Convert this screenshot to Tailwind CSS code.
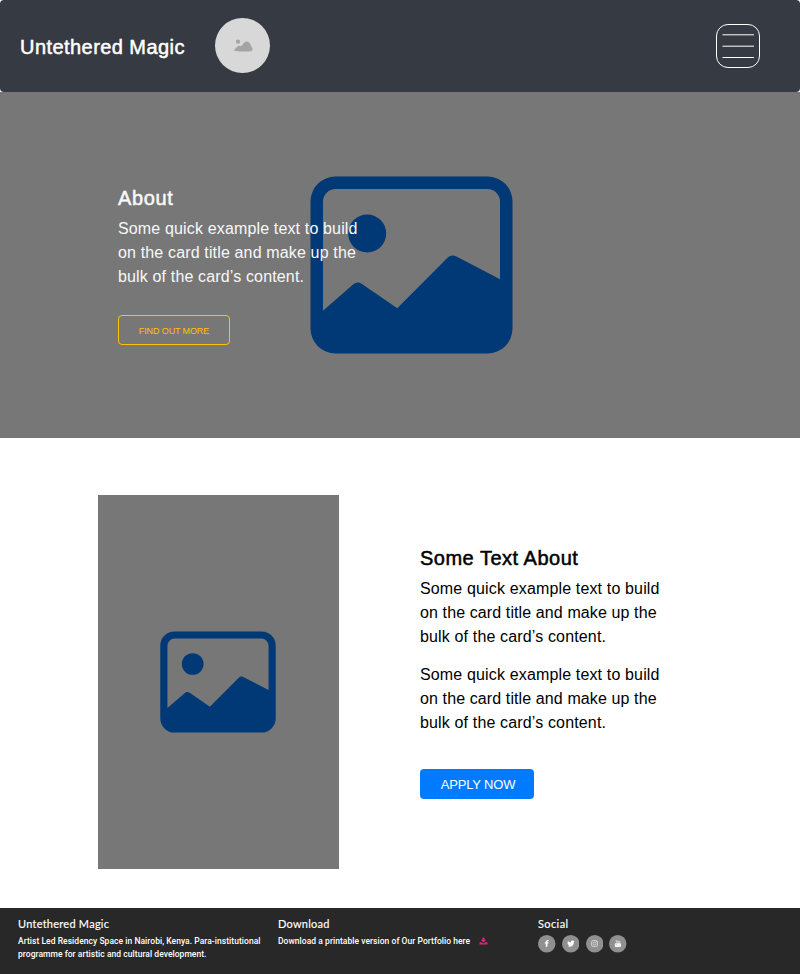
<!DOCTYPE html>
<html lang="en">
<head>
<meta charset="utf-8">
<title>Untethered Magic</title>
<script src="https://cdn.jsdelivr.net/npm/@tailwindcss/browser@4"></script>
</head>
<body class="w-[800px] bg-white font-['Liberation_Sans',sans-serif] text-black">
<svg class="hidden">
  <symbol id="image" viewBox="0 0 203 178">
    <path fill="#003976" fill-rule="evenodd" d="M25.5.5h152a25 25 0 0 1 25 25v127a25 25 0 0 1-25 25h-152a25 25 0 0 1-25-25v-127a25 25 0 0 1 25-25ZM13 134.700 43 108.500Q47.500 104.800 52 107.900L87.300 132.200 137.500 81.800Q141.500 77.800 146.500 80.500L190 103.200V25.500A12.500 12.500 0 0 0 177.500 13h-152A12.500 12.500 0 0 0 13 25.500Z"/>
    <circle cx="57.200" cy="57.500" r="19" fill="#003976"/>
  </symbol>
</svg>
<header class="flex h-[92px] items-center rounded bg-[#363a42] pl-5 pr-10">
  <h1 class="w-[195px] whitespace-nowrap pt-0.5 text-[20px] leading-6 tracking-[0.44px] text-white [-webkit-text-stroke:0.5px_white]">Untethered Magic</h1>
  <div class="mb-px flex size-[55px] items-center justify-center rounded-full bg-[#d8d8d8]">
    <svg class="h-[13px] w-[20px]" viewBox="0 0 20 13" fill="#a4a4a4"><circle cx="5" cy="2.700" r="2.100"/><path d="M.2 11.200C2 10.500 3.800 8 5 7c1-.8 2 .2 3 .2C9.500 7 10.500 2.600 14 2.600c3 0 3.500 4 5.300 6.400.6 1.200.2 2.400-1 2.900-2 .8-10 .8-13 .3-2-.3-4.300-.5-5.100-1Z"/></svg>
  </div>
  <button class="ml-auto size-11" aria-label="Menu">
    <svg class="size-11" viewBox="0 0 44 44" fill="none" stroke="#fff"><rect x=".5" y=".5" width="43" height="43" rx="11.500"/><path d="M6.500 10.800h31.500M6.500 22.200h31.500M6.500 33.500h31.500"/></svg>
  </button>
</header>
<section class="relative h-[346px] bg-[#777]">
  <svg class="absolute left-[310px] top-[84px] h-[178px] w-[203px]"><use href="#image"/></svg>
  <div class="relative pl-[118px] pt-[94px]">
    <h2 class="text-[20px] leading-6 tracking-[0.65px] text-[#f8f8f8] [-webkit-text-stroke:0.5px_#f8f8f8]">About</h2>
    <p class="mt-[7px] whitespace-nowrap text-base leading-6 tracking-[0.15px] text-[#f8f8f8]">Some quick example text to build<br>on the card title and make up the<br>bulk of the card’s content.</p>
    <button class="mt-[26px] block h-[30px] w-[112px] whitespace-nowrap rounded border border-[#ffc107] pt-[3px] text-[9px] tracking-[-0.12px] text-[#ffc107]">FIND OUT MORE</button>
  </div>
</section>
<main class="flex h-[470px] pl-[98px] pt-[57px]">
  <div class="flex h-[374px] w-[241px] items-center justify-center bg-[#777] pr-px">
    <svg class="h-[102px] w-[116px]"><use href="#image"/></svg>
  </div>
  <div class="ml-[81px] pt-[51px]">
    <h2 class="text-[20px] leading-6 tracking-[0.5px] [-webkit-text-stroke:0.5px_black]">Some Text About</h2>
    <p class="mt-[7px] whitespace-nowrap text-base leading-6 tracking-[0.15px]">Some quick example text to build<br><span class="tracking-[0.11px]">on the card title and make up the</span><br>bulk of the card’s content.</p>
    <p class="mt-[14px] whitespace-nowrap text-base leading-6 tracking-[0.15px]">Some quick example text to build<br><span class="tracking-[0.11px]">on the card title and make up the</span><br>bulk of the card’s content.</p>
    <button class="mt-[34px] block h-[30px] w-[114px] whitespace-nowrap rounded bg-[#007bff] pl-[2px] pt-px text-[13px] tracking-[-0.15px] text-white">APPLY NOW</button>
  </div>
</main>
<footer class="flex h-[66px] bg-[#282828] pl-[18px] pt-[10px] text-white">
  <section class="w-[260px]">
    <h3 class="whitespace-nowrap font-[Lato,sans-serif] text-[11px] leading-[12px] tracking-[0.25px] [-webkit-text-stroke:0.15px_white]">Untethered Magic</h3>
    <p class="mt-[5px] whitespace-nowrap font-[Roboto,sans-serif] text-[8.500px] font-medium leading-[13px] tracking-[0.045px]">Artist Led Residency Space in Nairobi, Kenya. Para-institutional<br>programme for artistic and cultural development.</p>
  </section>
  <section class="w-[260px]">
    <h3 class="font-[Lato,sans-serif] text-[11px] leading-[12px] tracking-[0.25px] [-webkit-text-stroke:0.15px_white]">Download</h3>
    <p class="mt-[5px] flex items-center whitespace-nowrap font-[Roboto,sans-serif] text-[8.500px] font-medium leading-[13px] tracking-[0.045px]">Download a printable version of Our Portfolio here
      <svg class="ml-[9px] size-[9px]" viewBox="0 0 9 9" fill="#d9267d"><path d="M3.500.500h2v2.300h1.800L4.500 5.500 1.700 2.800h1.800ZM.5 5.200h2l2 1.300 2-1.300h2V7.500h-8Z"/></svg>
    </p>
  </section>
  <section>
    <h3 class="font-[Lato,sans-serif] text-[11px] leading-[12px] tracking-[0.4px] [-webkit-text-stroke:0.15px_white]">Social</h3>
    <div class="mt-[5px] flex gap-[6.300px]">
      <svg class="size-[17.500px]" viewBox="0 0 18 18"><circle cx="9" cy="9" r="9" fill="#909090"/><path fill="#fff" d="M8 12V8.800H7V7.500h1c-.1-2 .8-2.700 2.900-2.400v1.200c-1-.1-1.300.2-1.200 1.200h1.200l-.3 1.300h-.9V12Z"/></svg>
      <svg class="size-[17.500px]" viewBox="0 0 18 18"><circle cx="9" cy="9" r="9" fill="#909090"/><path fill="#fff" d="M6 6.200c1 1 2 1.500 3.100 1.500-.2-2 1.600-2.600 2.700-1.600l1-.3-.5.900.7-.1-.8.9c-.1 4-3.500 5.500-6.600 4.100 1 0 1.500-.2 2-.6-.8-.1-1.200-.4-1.400-1h.6c-.8-.4-1.200-.9-1.200-1.700l.7.200C5.600 7.900 5.600 7 6 6.200Z"/></svg>
      <svg class="size-[17.500px]" viewBox="0 0 18 18"><circle cx="9" cy="9" r="9" fill="#909090"/><g fill="none" stroke="#e8e8e8" stroke-width=".75"><rect x="5.800" y="5.800" width="6" height="6" rx="1.300"/><circle cx="8.800" cy="8.800" r="1.500"/></g><circle cx="10.700" cy="6.900" r=".4" fill="#fff"/></svg>
      <svg class="size-[17.500px]" viewBox="0 0 18 18"><circle cx="9" cy="9" r="9" fill="#909090"/><rect x="6" y="8.600" width="6.300" height="3.800" rx=".8" fill="#fff"/><path fill="none" stroke="#fff" stroke-width=".5" d="m7 5.200.6 1.400.6-1.400M7.600 6.600V8M8.900 6.300v1.500h.7V6.300ZM10.400 6.100v1.700h.8V6.100"/><path fill="none" stroke="#a0a0a0" stroke-width=".35" d="M7 9.700h1.200M7.600 9.700v1.800M9 10v1.500M10.400 9.700v1.800h.8"/></svg>
    </div>
  </section>
</footer>
</body>
</html>
